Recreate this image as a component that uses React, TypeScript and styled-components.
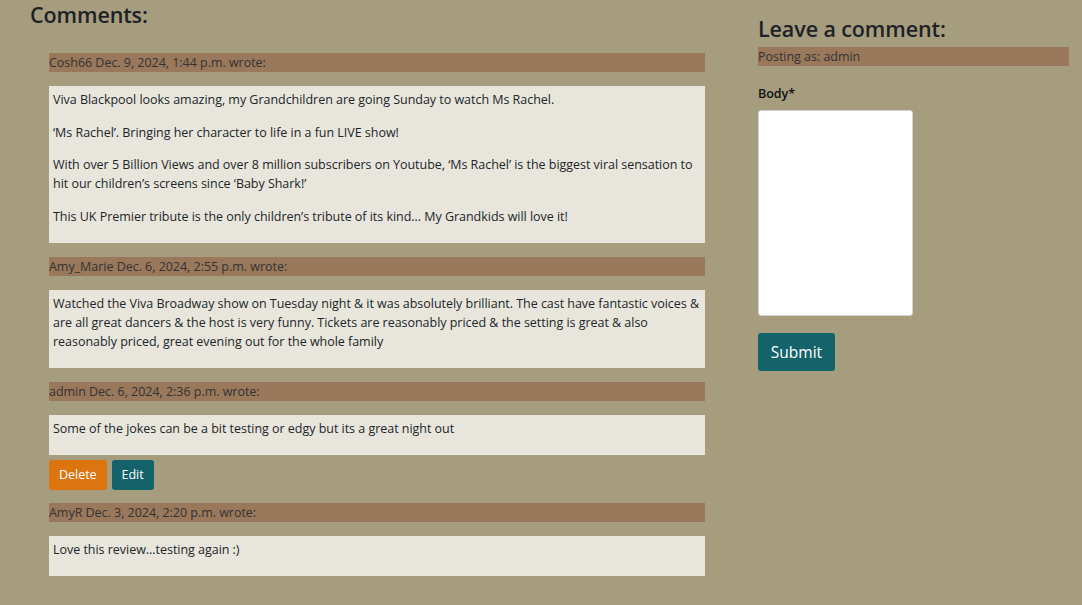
import React from "react";
import styled, { createGlobalStyle } from "styled-components";

const GlobalStyle = createGlobalStyle`
  html, body { margin: 0; padding: 0; }
  body {
    background: #a59d7e;
    font-family: "Open Sans", "Noto Sans", sans-serif;
    font-size: 12.5px;
    letter-spacing: -0.03px;
    line-height: 19px;
    color: #212529;
  }
  * { box-sizing: border-box; }
`;

const Page = styled.div`
  display: flex;
  align-items: flex-start;
  padding: 0 13px 0 30px;
  width: 1082px;
  height: 605px;
  overflow: hidden;
`;

const LeftColumn = styled.section`
  flex: 0 0 696px;
  display: flex;
  flex-direction: column;
`;

const RightColumn = styled.aside`
  flex: 1;
  margin-left: 32px;
  padding-top: 14px;
  display: flex;
  flex-direction: column;
`;

const Heading = styled.h3`
  margin: 0;
  font-size: 21.5px;
  letter-spacing: -0.1px;
  line-height: 30px;
  font-weight: 600;
  color: #1e2226;
`;

const CommentList = styled.div`
  display: flex;
  flex-direction: column;
  margin: 23px 21px 0 19px;
`;

const CommentHeader = styled.div`
  background: #9a785c;
  color: #333;
  height: 19px;
  line-height: 19px;
  margin-bottom: 14px;
  white-space: nowrap;
`;

const CommentBody = styled.div`
  background: #e8e6dc;
  padding: 4px 2px 3.5px 4px;
  margin-bottom: 14px;
  p {
    margin: 0 0 13.5px 0;
  }
`;

const Actions = styled.div`
  display: flex;
  gap: 5px;
  margin: -9px 0 13px;
`;

const Button = styled.button<{ $variant: "danger" | "primary" }>`
  font-family: inherit;
  font-size: 12.5px;
  letter-spacing: -0.03px;
  line-height: 19px;
  color: #fff;
  border: none;
  border-radius: 3px;
  padding: 5px 10px;
  height: 30px;
  background: ${(p) => (p.$variant === "danger" ? "#dc7510" : "#14636a")};
  cursor: pointer;
`;

const PostingAs = styled.div`
  background: #9a785c;
  color: #333;
  height: 19px;
  line-height: 19px;
  margin-top: 3px;
`;

const Label = styled.label`
  display: block;
  font-weight: 600;
  margin-top: 18px;
  color: #111;
`;

const TextArea = styled.textarea`
  display: block;
  width: 155px;
  height: 206px;
  margin-top: 7px;
  border: 1px solid #d4d4d4;
  border-radius: 3px;
  background: #fff;
  resize: none;
`;

const SubmitButton = styled.button`
  align-self: flex-start;
  margin-top: 17px;
  font-family: inherit;
  font-size: 15.5px;
  line-height: 24px;
  color: #fff;
  background: #14636a;
  border: none;
  border-radius: 3px;
  width: 77px;
  height: 38px;
  padding: 0;
`;

type Comment = {
  author: string;
  date: string;
  paragraphs: string[];
  own?: boolean;
};

const comments: Comment[] = [
  {
    author: "Cosh66",
    date: "Dec. 9, 2024, 1:44 p.m.",
    paragraphs: [
      "Viva Blackpool looks amazing, my Grandchildren are going Sunday to watch Ms Rachel.",
      "\u2018Ms Rachel\u2019. Bringing her character to life in a fun LIVE show!",
      "With over 5 Billion Views and over 8 million subscribers on Youtube, \u2018Ms Rachel\u2019 is the biggest viral sensation to hit our children\u2019s screens since \u2018Baby Shark!\u2019",
      "This UK Premier tribute is the only children\u2019s tribute of its kind\u2026 My Grandkids will love it!",
    ],
  },
  {
    author: "Amy_Marie",
    date: "Dec. 6, 2024, 2:55 p.m.",
    paragraphs: [
      "Watched the Viva Broadway show on Tuesday night & it was absolutely brilliant. The cast have fantastic voices & are all great dancers & the host is very funny. Tickets are reasonably priced & the setting is great & also reasonably priced, great evening out for the whole family",
    ],
  },
  {
    author: "admin",
    date: "Dec. 6, 2024, 2:36 p.m.",
    paragraphs: ["Some of the jokes can be a bit testing or edgy but its a great night out"],
    own: true,
  },
  {
    author: "AmyR",
    date: "Dec. 3, 2024, 2:20 p.m.",
    paragraphs: ["Love this review...testing again :)"],
  },
];

export default function App() {
  return (
    <>
      <GlobalStyle />
      <Page>
        <LeftColumn>
          <Heading>Comments:</Heading>
          <CommentList>
            {comments.map((c) => (
              <React.Fragment key={c.author + c.date}>
                <CommentHeader>
                  {c.author} {c.date} wrote:
                </CommentHeader>
                <CommentBody>
                  {c.paragraphs.map((p, i) => (
                    <p key={i}>{p}</p>
                  ))}
                </CommentBody>
                {c.own && (
                  <Actions>
                    <Button $variant="danger">Delete</Button>
                    <Button $variant="primary">Edit</Button>
                  </Actions>
                )}
              </React.Fragment>
            ))}
          </CommentList>
        </LeftColumn>
        <RightColumn>
          <Heading>Leave a comment:</Heading>
          <PostingAs>Posting as: admin</PostingAs>
          <Label htmlFor="body">Body*</Label>
          <TextArea id="body" />
          <SubmitButton>Submit</SubmitButton>
        </RightColumn>
      </Page>
    </>
  );
}
